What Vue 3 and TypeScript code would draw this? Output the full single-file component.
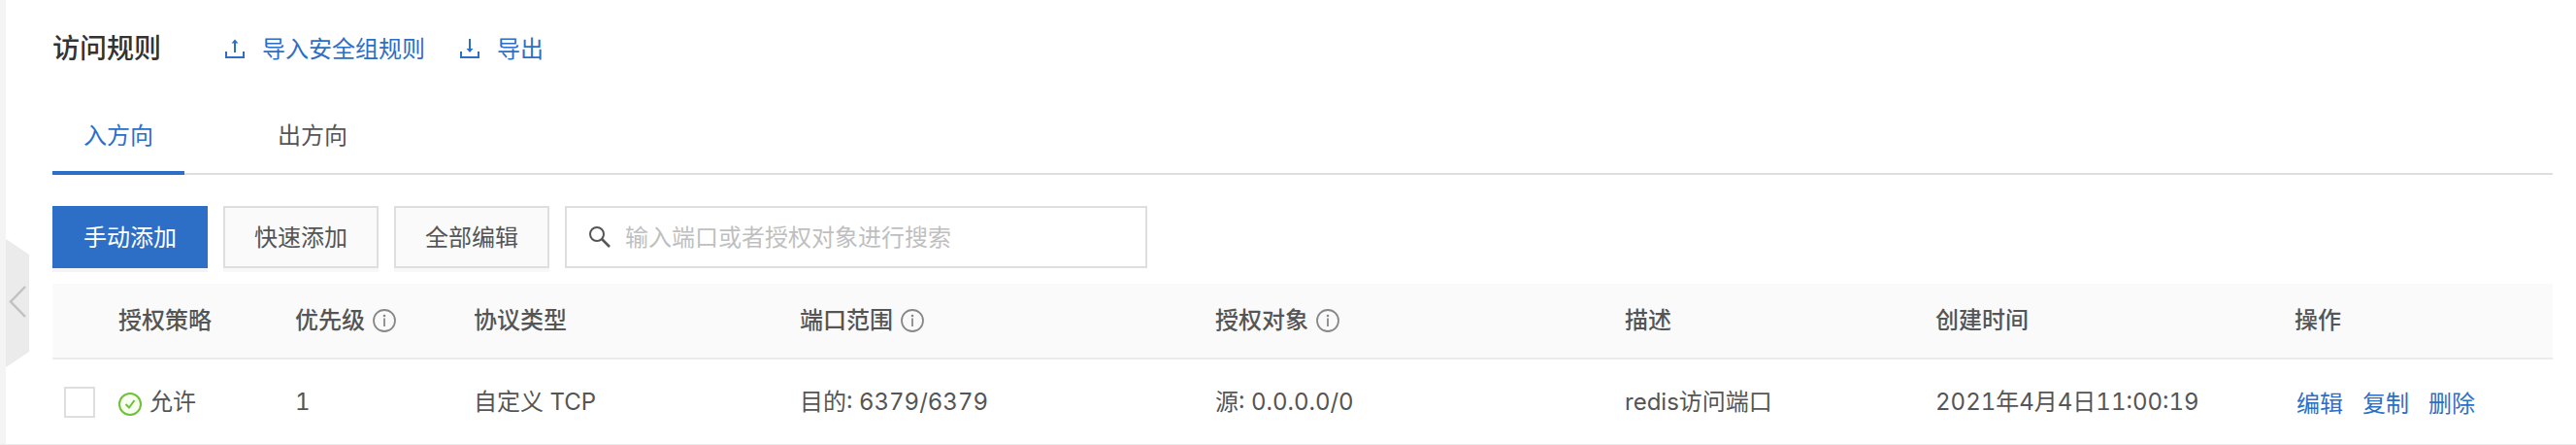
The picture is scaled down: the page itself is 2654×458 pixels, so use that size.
<script setup lang="ts">
import { ref } from 'vue'

interface Column {
  key: string
  label: string
  width: number
  info?: boolean
}

interface Rule {
  id: number
  policy: string
  priority: number
  protocol: string
  port: string
  target: string
  description: string
  createdAt: string
}

const columns: Column[] = [
  { key: 'policy', label: '授权策略', width: 182 },
  { key: 'priority', label: '优先级', width: 184, info: true },
  { key: 'protocol', label: '协议类型', width: 336 },
  { key: 'port', label: '端口范围', width: 428, info: true },
  { key: 'target', label: '授权对象', width: 422, info: true },
  { key: 'description', label: '描述', width: 320 },
  { key: 'createdAt', label: '创建时间', width: 370 },
  { key: 'actions', label: '操作', width: 282 },
]

const rules: Rule[] = [
  {
    id: 1,
    policy: '允许',
    priority: 1,
    protocol: '自定义 TCP',
    port: '目的: 6379/6379',
    target: '源: 0.0.0.0/0',
    description: 'redis访问端口',
    createdAt: '2021年4月4日11:00:19',
  },
]

const tabs = ['入方向', '出方向']
const actions = ['编辑', '复制', '删除']
const activeTab = ref(0)
const keyword = ref('')
const selected = ref<number[]>([])
</script>

<template>
  <div class="page">
    <aside class="rail">
      <button class="collapse" type="button" aria-label="收起">
        <svg width="24" height="132" viewBox="0 0 24 132" aria-hidden="true">
          <path d="M0 0L24 16V116L0 132Z" fill="#ebebeb" />
          <path d="M20 49L5 64.500L20 80" fill="none" stroke="#c1c1c1" stroke-width="2.500" />
        </svg>
      </button>
    </aside>

    <main class="content">
      <header class="heading">
        <h1>访问规则</h1>
        <a class="tool" href="#">
          <svg width="20" height="20" viewBox="0 0 20 20" aria-hidden="true">
            <path d="M1 13V19H19V13M10 14V2" fill="none" stroke="currentColor" stroke-width="2" />
            <path d="M6.500 4.500L10 0.500L13.500 4.500Z" fill="currentColor" />
          </svg>
          <span>导入安全组规则</span>
        </a>
        <a class="tool" href="#">
          <svg width="20" height="20" viewBox="0 0 20 20" aria-hidden="true">
            <path d="M1 13V19H19V13M10 0V12" fill="none" stroke="currentColor" stroke-width="2" />
            <path d="M6.500 10L10 14L13.500 10Z" fill="currentColor" />
          </svg>
          <span>导出</span>
        </a>
      </header>

      <div class="tabs" role="tablist">
        <button
          v-for="(tab, i) in tabs"
          :key="tab"
          type="button"
          role="tab"
          class="tab"
          :class="{ active: activeTab === i }"
          :aria-selected="activeTab === i"
          @click="activeTab = i"
        >
          {{ tab }}
        </button>
      </div>

      <div class="toolbar">
        <button type="button" class="btn primary">手动添加</button>
        <button type="button" class="btn">快速添加</button>
        <button type="button" class="btn">全部编辑</button>
        <label class="search">
          <svg width="24" height="24" viewBox="0 0 24 24" aria-hidden="true">
            <circle cx="9" cy="9" r="7" fill="none" stroke="#555" stroke-width="2" />
            <path d="M14 14L22 22" stroke="#555" stroke-width="2.500" />
          </svg>
          <input v-model="keyword" type="text" aria-label="搜索" placeholder="输入端口或者授权对象进行搜索" />
        </label>
      </div>

      <table class="rules">
        <colgroup>
          <col class="pick-col" />
          <col v-for="c in columns" :key="c.key" :style="{ width: c.width + 'px' }" />
        </colgroup>
        <thead>
          <tr>
            <td></td>
            <th v-for="c in columns" :key="c.key" scope="col">
              <span class="label">
                {{ c.label }}
                <svg v-if="c.info" width="24" height="24" viewBox="0 0 24 24" aria-hidden="true">
                  <circle cx="12" cy="12" r="11" fill="none" stroke="#888" stroke-width="1.800" />
                  <path d="M12 9.500V18" stroke="#888" stroke-width="1.800" />
                  <circle cx="12" cy="7" r="1.300" fill="#888" />
                </svg>
              </span>
            </th>
          </tr>
        </thead>
        <tbody>
          <tr v-for="r in rules" :key="r.id">
            <td class="pick">
              <input v-model="selected" type="checkbox" :value="r.id" aria-label="选择规则" />
            </td>
            <td>
              <span class="label status">
                <svg width="24" height="24" viewBox="0 0 24 24" aria-hidden="true">
                  <circle cx="12" cy="12" r="11" fill="#f7ffee" stroke="#6fc03c" stroke-width="2" />
                  <path d="M7.500 12L11 15.500L16.500 8" fill="none" stroke="#6fc03c" stroke-width="2" />
                </svg>
                {{ r.policy }}
              </span>
            </td>
            <td>{{ r.priority }}</td>
            <td>{{ r.protocol }}</td>
            <td>{{ r.port }}</td>
            <td>{{ r.target }}</td>
            <td>{{ r.description }}</td>
            <td>{{ r.createdAt }}</td>
            <td>
              <span class="actions">
                <a v-for="a in actions" :key="a" href="#">{{ a }}</a>
              </span>
            </td>
          </tr>
        </tbody>
      </table>
    </main>
  </div>
</template>

<style>
body {
  background: #fff;
}
</style>

<style scoped>
.page {
  display: flex;
  box-sizing: border-box;
  min-height: 100vh;
  border-bottom: 1px solid #ebebeb;
  color: #555;
  font: 24px/36px Inter, "Noto Sans CJK SC", sans-serif;
  font-variant-numeric: tabular-nums;
}

.page * {
  box-sizing: border-box;
}

button,
input {
  margin: 0;
  color: inherit;
  font: inherit;
}

a {
  color: #2d6fc6;
  text-decoration: none;
}

svg {
  flex: none;
  display: block;
}

.rail {
  flex: none;
  width: 6px;
  padding-top: 246px;
  background: #f4f4f4;
}

.collapse {
  display: block;
  margin-left: 6px;
  padding: 0;
  border: 0;
  background: none;
}

.content {
  flex: 1;
  min-width: 0;
  padding: 28px 24px 0 48px;
}

.heading {
  display: flex;
  align-items: center;
  height: 44px;
}

h1 {
  margin: 0 30px 0 0;
  color: #333;
  font-size: 28px;
  font-weight: 500;
  line-height: 44px;
}

.tool {
  display: flex;
  align-items: center;
  gap: 18px;
  margin-left: 36px;
}

.tool span {
  padding-top: 2px;
}

.tabs {
  display: flex;
  gap: 64px;
  margin-top: 32px;
  box-shadow: inset 0 -2px #dedede;
}

.tab {
  height: 76px;
  padding: 0 32px 4px;
  border: 0;
  background: none;
}

.tab.active {
  color: #2d6fc6;
  box-shadow: inset 0 -4px #2d6fc6;
}

.toolbar {
  display: flex;
  gap: 16px;
  margin-top: 32px;
}

.btn {
  height: 64px;
  padding: 2px 30px 0;
  border: 2px solid #dedede;
  background: #fafafa;
  box-shadow: 0 4px #f8f8f8;
}

.primary {
  border-color: #2d6fc6;
  background: #2d6fc6;
  color: #fff;
  box-shadow: 0 4px #f4f4f4;
}

.search {
  display: flex;
  align-items: center;
  gap: 14px;
  width: 600px;
  height: 64px;
  padding: 0 22px;
  border: 2px solid #dedede;
}

.search input {
  flex: 1;
  min-width: 0;
  padding: 2px 0 0;
  border: 0;
  outline: 0;
  background: none;
}

.search input::placeholder {
  color: #bfbfbf;
}

.rules {
  width: 100%;
  margin-top: 16px;
  border-collapse: separate;
  border-spacing: 0;
  table-layout: fixed;
}

.pick-col {
  width: 52px;
}

th,
td {
  padding: 0 0 0 16px;
  font-weight: 400;
  text-align: left;
  white-space: nowrap;
}

thead th,
thead td {
  height: 78px;
  border-bottom: 2px solid #ebebeb;
  background: #fafafa;
}

thead th {
  font-weight: 500;
}

tbody td {
  height: 87px;
}

tbody tr + tr td {
  border-top: 1px solid #ebebeb;
}

.label {
  display: flex;
  align-items: center;
  gap: 8px;
}

.status svg {
  margin-top: 4px;
}

td.pick {
  padding-left: 12px;
}

.pick input {
  display: block;
  width: 32px;
  height: 32px;
  border: 2px solid #dedede;
  background: #fff;
  appearance: none;
}

.pick input:checked {
  border-color: #2d6fc6;
  background: #2d6fc6;
}

.actions {
  display: flex;
  gap: 20px;
  padding: 4px 0 0 2px;
}
</style>
